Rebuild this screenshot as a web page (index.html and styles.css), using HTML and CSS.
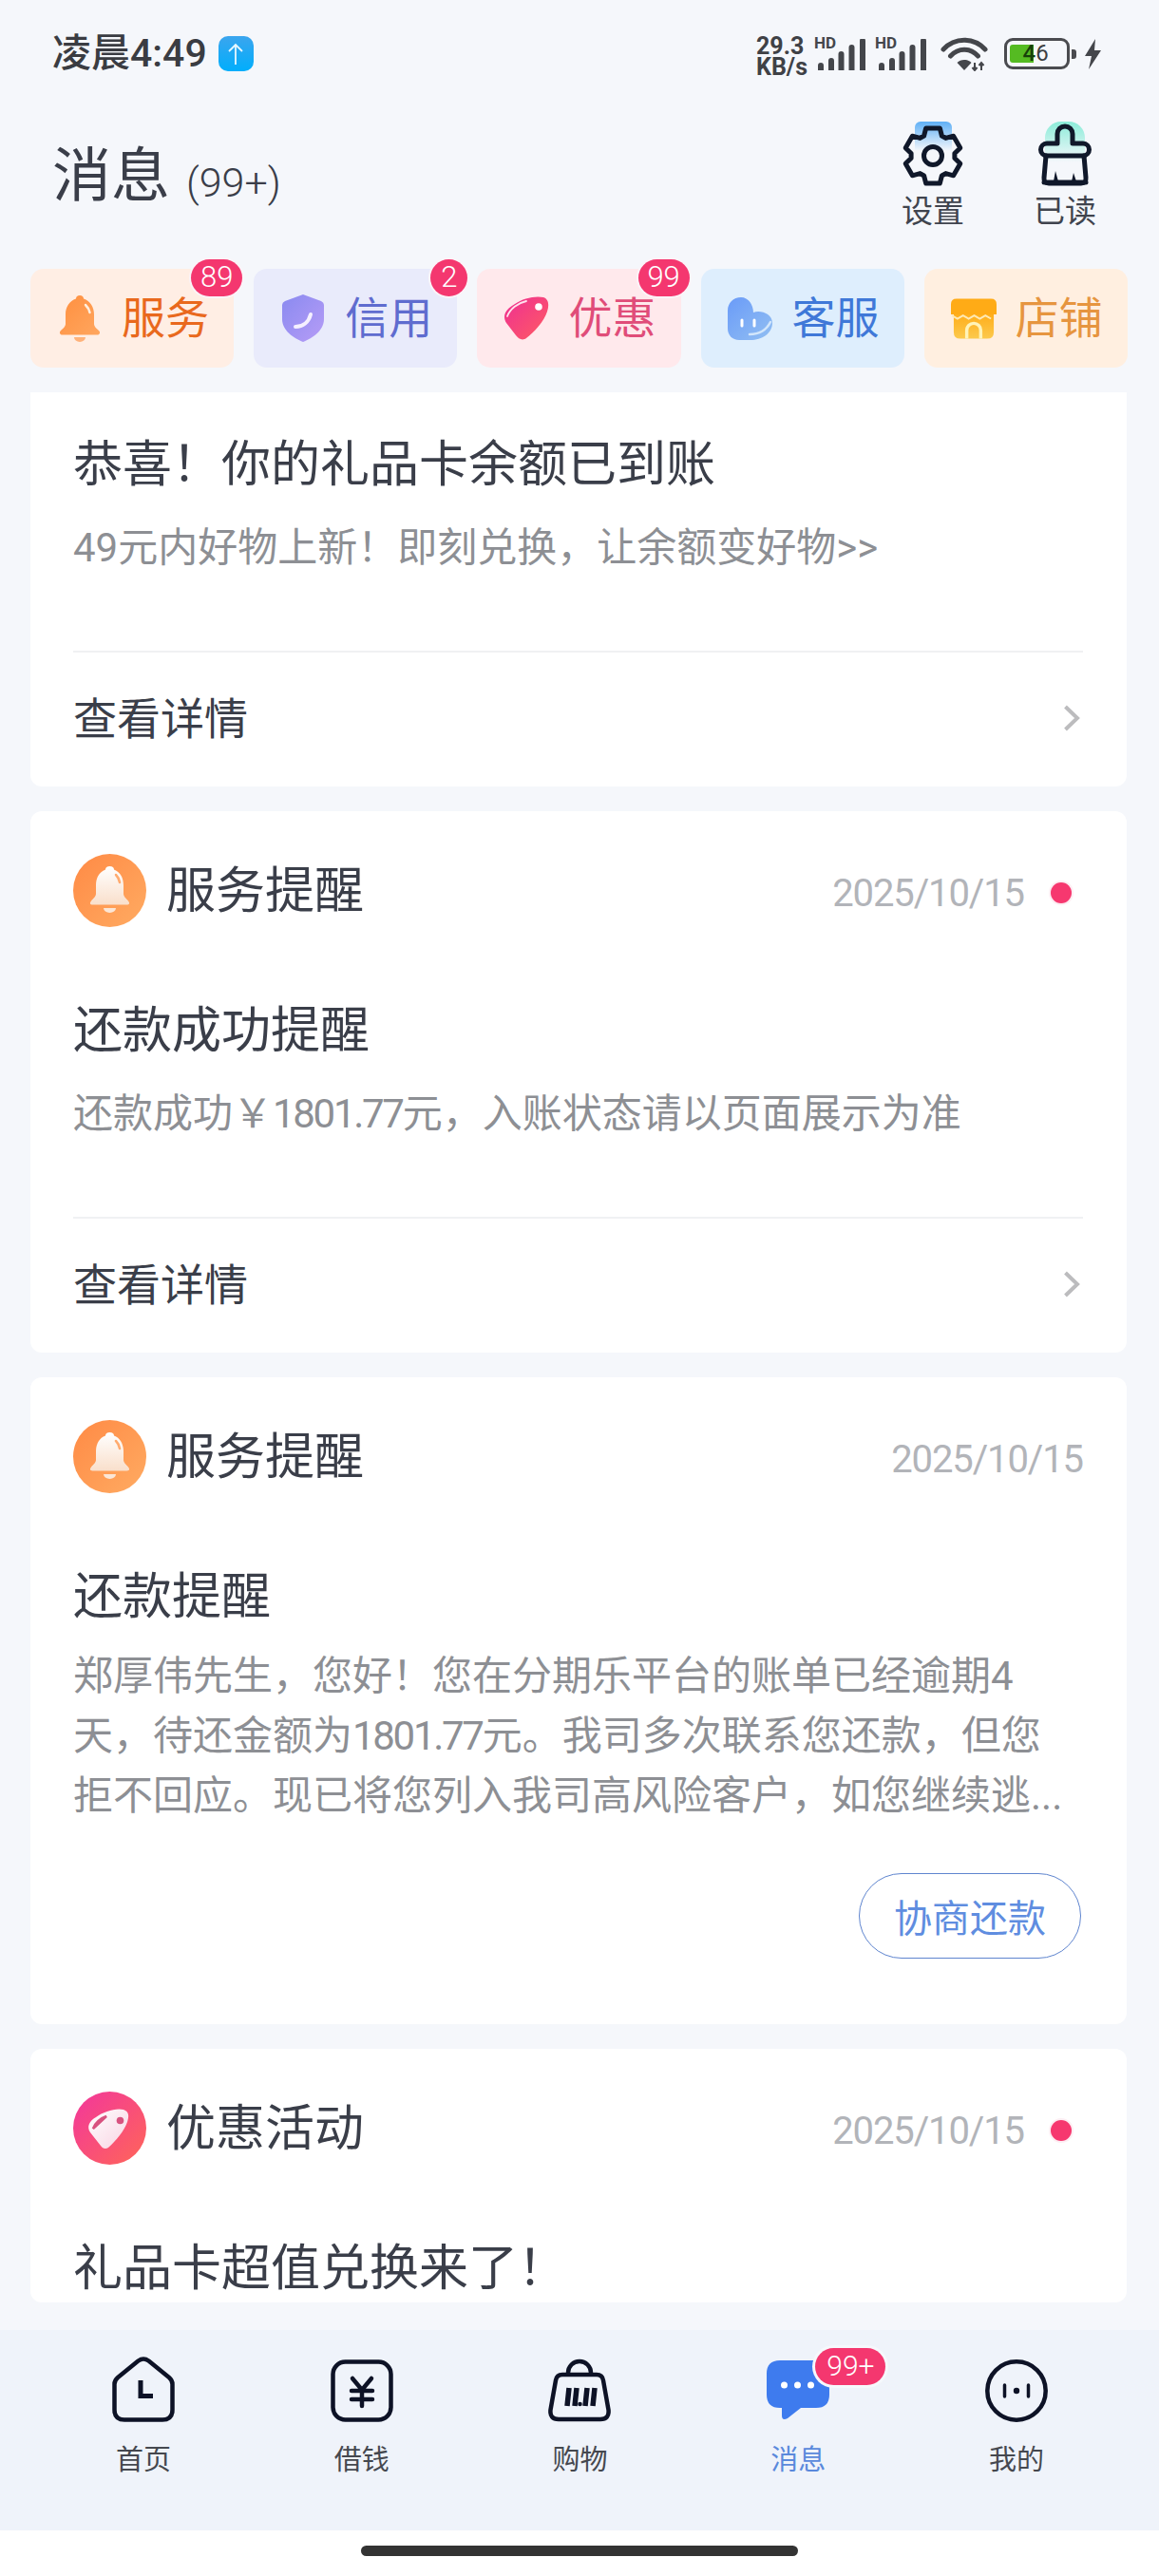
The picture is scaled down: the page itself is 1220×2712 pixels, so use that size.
FILE: index.html
```html
<!DOCTYPE html>
<html lang="zh">
<head>
<meta charset="utf-8">
<title>消息</title>
<link rel="stylesheet" href="styles.css">
</head>
<body>
<div class="app">
  <div class="status-bar">
    <div class="status-left">
      <span class="clock">凌晨4:49</span>
      <span class="upload"><svg width="20" height="24" viewBox="0 0 20 24"><path d="M10 23V2M3 9l7-7 7 7" fill="none" stroke="#e8f8ff" stroke-width="1.8"/></svg></span>
    </div>
    <div class="status-right">
      <div class="speed"><span>29.3</span><span>KB/s</span></div>
      <div class="signal"><span class="hd">HD</span>
        <svg width="50" height="33" viewBox="0 0 50 33"><path d="M0 28a3 3 0 0 1 6 0v5H0zM11 23a3 3 0 0 1 6 0v10h-6zM21.500 16a3 3 0 0 1 6 0v17h-6zM32.500 9a3 3 0 0 1 6 0v24h-6zM44 2a3 3 0 0 1 6 0v31h-6z" fill="#44464b"/></svg>
      </div>
      <div class="signal signal-last"><span class="hd">HD</span>
        <svg width="50" height="33" viewBox="0 0 50 33"><path d="M0 28a3 3 0 0 1 6 0v5H0zM11 23a3 3 0 0 1 6 0v10h-6zM21.500 16a3 3 0 0 1 6 0v17h-6zM32.500 9a3 3 0 0 1 6 0v24h-6zM44 2a3 3 0 0 1 6 0v31h-6z" fill="#44464b"/></svg>
      </div>
      <svg class="wifi" width="50" height="37" viewBox="0 0 50 37"><g fill="none" stroke="#44464b" stroke-width="5" stroke-linecap="round"><path d="M3 14C15 1 35 1 47 14"/><path d="M10.500 21C19 12 31 12 39.500 21"/></g><path d="M17.500 28C21 24 29 24 32.500 28L25 36Z" fill="#44464b"/><path d="M36 28v8M33.500 33l2.500 3 2.500-3M43 36v-8M40.500 31l2.500-3 2.500 3" fill="none" stroke="#44464b" stroke-width="2"/></svg>
      <div class="battery"><span class="battery-fill"></span><span class="battery-num"><b>4</b>6</span></div>
      <span class="battery-nub"></span>
      <svg class="bolt" width="19" height="32" viewBox="0 0 19 32"><path d="M12 0L1 18h7L5 32 18 12h-7z" fill="#44464b"/></svg>
    </div>
  </div>

  <header class="page-header">
    <h1 class="page-title">消息<span class="page-count">(99+)</span></h1>
    <div class="header-actions">
      <div class="action">
        <svg width="64" height="69" viewBox="0 -3 64 69">
          <defs><linearGradient id="gearGlow" x1="0" y1="0" x2="0" y2="1"><stop offset="0" stop-color="#5fb0f6"/><stop offset="1" stop-color="#5fb0f6" stop-opacity="0"/></linearGradient></defs>
          <path d="M13 28V3a6 6 0 0 1 6-6h27a6 6 0 0 1 6 6v25z" fill="url(#gearGlow)"/>
          <polygon points="24.700,3.900 39.300,3.900 41.400,12 45.500,14.400 53.600,12.200 60.800,24.700 54.900,30.600 54.900,35.400 60.800,41.300 53.600,53.800 45.500,51.600 41.400,54 39.300,62.100 24.700,62.100 22.600,54 18.500,51.600 10.400,53.800 3.200,41.300 9.100,35.400 9.100,30.600 3.200,24.700 10.400,12.200 18.500,14.400 22.600,12" fill="none" stroke="#10182a" stroke-width="5" stroke-linejoin="round"/>
          <circle cx="32" cy="33" r="9.500" fill="none" stroke="#10182a" stroke-width="5"/>
        </svg>
        <span class="action-label">设置</span>
      </div>
      <div class="action">
        <svg width="56" height="69" viewBox="0 -3 56 69">
          <defs><linearGradient id="broomGlow" x1="0" y1="0" x2="0" y2="1"><stop offset="0" stop-color="#8cecd9"/><stop offset="1" stop-color="#8cecd9" stop-opacity="0"/></linearGradient></defs>
          <path d="M7 40V14A17 17 0 0 1 24-3h8a17 17 0 0 1 17 17v26z" fill="url(#broomGlow)"/>
          <g fill="none" stroke="#10182a" stroke-width="5" stroke-linejoin="round" stroke-linecap="round">
            <path d="M20 20V10a8 8 0 0 1 16 0V20H47a6.500 6.500 0 0 1 0 13H9a6.500 6.500 0 0 1 0-13Z"/>
            <path d="M8 33L6 56Q5.500 62 11 62H45Q50.500 62 50 56L48 33"/>
            <path d="M6 61H50" stroke-width="5"/>
          </g>
          <path d="M16 60l2-11 3 11zM35 60l2-9 3 9z" fill="#10182a"/>
        </svg>
        <span class="action-label">已读</span>
      </div>
    </div>
  </header>

  <nav class="tabs">
    <div class="tab tab-service">
      <span class="tab-icon"><svg width="44" height="50" viewBox="0 0 44 50">
        <defs><linearGradient id="bellO" x1="0" y1="0" x2="1" y2="1"><stop offset="0" stop-color="#ff8f3f"/><stop offset="1" stop-color="#ffa65e"/></linearGradient></defs>
        <path d="M22 1c2.500 0 4 1.500 4 3.500C33 7 37 13 37 21V31c0 3 3 5 5 7s1 4.500-1.500 4.500H3.500C1 42.500 0 40 2 38s5-4 5-7V21C7 13 11 7 18 4.500 18 2.500 19.500 1 22 1Z" fill="url(#bellO)"/>
        <path d="M16 45h12a6 5 0 0 1-12 0Z" fill="#ffb27a"/>
        <path d="M28 11c2 2 4 5 4.500 8" fill="none" stroke="#ffeedd" stroke-width="2.500" stroke-linecap="round"/>
      </svg></span>
      <span class="tab-text">服务</span>
      <span class="badge badge-wide">89</span>
    </div>
    <div class="tab tab-credit">
      <span class="tab-icon"><svg width="44" height="50" viewBox="0 0 44 50">
        <defs><linearGradient id="shieldP" x1="0" y1="0" x2="1" y2="1"><stop offset="0" stop-color="#8a8af0"/><stop offset="1" stop-color="#b69cf6"/></linearGradient></defs>
        <path d="M22 0L41 7Q44 8.500 44 11V26C44 38 32 46 22 50 12 46 0 38 0 26V11Q0 8.500 3 7Z" fill="url(#shieldP)"/>
        <path d="M14 34C22 34 28 29 30 21" fill="none" stroke="#f5f0ff" stroke-width="4" stroke-linecap="round"/>
      </svg></span>
      <span class="tab-text">信用</span>
      <span class="badge badge-round">2</span>
    </div>
    <div class="tab tab-offer">
      <span class="tab-icon"><svg width="48" height="46" viewBox="0 0 48 46">
        <defs><linearGradient id="tagP" x1="0" y1="0" x2="1" y2="1"><stop offset="0" stop-color="#ee2f93"/><stop offset="1" stop-color="#ff5c62"/></linearGradient></defs>
        <path d="M12 8C20 2 34-1 42 1c6 2 6 9 4 15C43 26 32 38 24 44c-4 3-8 1-11-3L3 28C-2 20 3 13 12 8Z" fill="url(#tagP)"/>
        <circle cx="37" cy="11" r="3.800" fill="#fff"/>
        <path d="M4 21C7 13 15 7 24 5" fill="none" stroke="#ffe3ee" stroke-width="1.800" stroke-linecap="round"/>
      </svg></span>
      <span class="tab-text">优惠</span>
      <span class="badge badge-wide">99</span>
    </div>
    <div class="tab tab-support">
      <span class="tab-icon"><svg width="47" height="45" viewBox="0 0 47 45">
        <defs><linearGradient id="headB" x1="0" y1="0" x2="1" y2="1"><stop offset="0" stop-color="#6a9bf8"/><stop offset="1" stop-color="#92bff2"/></linearGradient></defs>
        <path d="M14 0C22 0 27 8 27 16 34 13 47 17 47 27 47 38 36 45 24 45H12C5 45 0 40 0 33V14C0 6 6 0 14 0Z" fill="url(#headB)"/>
        <path d="M15 24v6M28 24v6" stroke="#fff" stroke-width="3" stroke-linecap="round"/>
        <path d="M23 39C33 39 41 34 45 26" fill="none" stroke="#d2e6fb" stroke-width="2.500" stroke-linecap="round"/>
      </svg></span>
      <span class="tab-text">客服</span>
    </div>
    <div class="tab tab-shop">
      <span class="tab-icon"><svg width="49" height="43" viewBox="0 0 49 43">
        <defs><linearGradient id="shopB" x1="0" y1="0" x2="0" y2="1"><stop offset="0" stop-color="#ffab16"/><stop offset="1" stop-color="#fcc94c"/></linearGradient></defs>
        <path d="M3 14H46V36Q46 43 39 43H10Q3 43 3 36Z" fill="url(#shopB)"/>
        <path d="M6 0H43Q49 0 49 6V17H0V6Q0 0 6 0Z" fill="#ffab16"/>
        <path d="M1 18l6 3.500 6-3.500 6 3.500 6-3.500 6 3.500 6-3.500 6 3.500" fill="none" stroke="#ffe9b4" stroke-width="2"/>
        <path d="M17 43V34a7.500 7.500 0 0 1 15 0V43" fill="none" stroke="#fff3b8" stroke-width="3.500"/>
      </svg></span>
      <span class="tab-text">店铺</span>
    </div>
  </nav>

  <main class="feed">
    <article class="card card-clipped">
      <h2 class="card-title">恭喜！你的礼品卡余额已到账</h2>
      <p class="card-body">49元内好物上新！即刻兑换，让余额变好物&gt;&gt;</p>
      <div class="card-link"><span class="link-text">查看详情</span>
        <svg width="18" height="28" viewBox="0 0 18 28"><path d="M2.500 2L15 14 2.500 26" fill="none" stroke="#bcbcbe" stroke-width="4"/></svg>
      </div>
    </article>

    <article class="card">
      <div class="card-head">
        <div class="card-source">
          <svg class="avatar" width="77" height="77" viewBox="0 0 77 77">
            <defs>
              <linearGradient id="avO" x1="0" y1="0" x2="1" y2="1"><stop offset="0" stop-color="#ff8a45"/><stop offset="1" stop-color="#ffab62"/></linearGradient>
              <linearGradient id="avW" x1="0" y1="0" x2="0" y2="1"><stop offset="0" stop-color="#fff"/><stop offset="1" stop-color="#f9dfcb"/></linearGradient>
            </defs>
            <circle cx="38.500" cy="38.500" r="38.500" fill="url(#avO)"/>
            <path d="M38.500 13c3 0 4.500 1.500 4.500 3.500C50 19 53 26 53 33V42c0 3 3 5 5 7.500s1 4-1.500 4H20.500C18 53.500 17 52 19 49.500s5-4.500 5-7.500V33C24 26 27 19 34 16.500 34 14.500 35.500 13 38.500 13Z" fill="url(#avW)"/>
            <path d="M32 57h13a6.500 5 0 0 1-13 0Z" fill="#fbe6d6"/>
            <path d="M45 22c2 2 3.500 5 4 8" fill="none" stroke="#ffab70" stroke-width="2.500" stroke-linecap="round"/>
          </svg>
          <span class="source-name">服务提醒</span>
        </div>
        <div class="card-meta"><span class="card-date">2025/10/15</span><span class="dot"></span></div>
      </div>
      <h2 class="card-title card-title-gap">还款成功提醒</h2>
      <p class="card-body">还款成功￥<span class="num">1801.77</span>元，入账状态请以页面展示为准</p>
      <div class="card-link"><span class="link-text">查看详情</span>
        <svg width="18" height="28" viewBox="0 0 18 28"><path d="M2.500 2L15 14 2.500 26" fill="none" stroke="#bcbcbe" stroke-width="4"/></svg>
      </div>
    </article>

    <article class="card card-action">
      <div class="card-head">
        <div class="card-source">
          <svg class="avatar" width="77" height="77" viewBox="0 0 77 77">
            <circle cx="38.500" cy="38.500" r="38.500" fill="url(#avO)"/>
            <path d="M38.500 13c3 0 4.500 1.500 4.500 3.500C50 19 53 26 53 33V42c0 3 3 5 5 7.500s1 4-1.500 4H20.500C18 53.500 17 52 19 49.500s5-4.500 5-7.500V33C24 26 27 19 34 16.500 34 14.500 35.500 13 38.500 13Z" fill="url(#avW)"/>
            <path d="M32 57h13a6.500 5 0 0 1-13 0Z" fill="#fbe6d6"/>
            <path d="M45 22c2 2 3.500 5 4 8" fill="none" stroke="#ffab70" stroke-width="2.500" stroke-linecap="round"/>
          </svg>
          <span class="source-name">服务提醒</span>
        </div>
        <div class="card-meta"><span class="card-date">2025/10/15</span></div>
      </div>
      <h2 class="card-title card-title-gap">还款提醒</h2>
      <p class="card-body card-body-long">郑厚伟先生，您好！您在分期乐平台的账单已经逾期4<br>天，待还金额为<span class="num">1801.77</span>元。我司多次联系您还款，但您<br>拒不回应。现已将您列入我司高风险客户，如您继续逃...</p>
      <div class="card-actions"><button class="pill" type="button">协商还款</button></div>
    </article>

    <article class="card">
      <div class="card-head">
        <div class="card-source">
          <svg class="avatar" width="77" height="77" viewBox="0 0 77 77">
            <defs>
              <linearGradient id="avP" x1="0" y1="0" x2="1" y2="1"><stop offset="0" stop-color="#f2369c"/><stop offset="1" stop-color="#ff6658"/></linearGradient>
              <linearGradient id="avT" x1="0" y1="0" x2="1" y2="1"><stop offset="0" stop-color="#ffffff"/><stop offset="1" stop-color="#f8d3e2"/></linearGradient>
            </defs>
            <circle cx="38.500" cy="38.500" r="38.500" fill="url(#avP)"/>
            <path d="M24 27C32 21 45 17 53 19c6 2 6 7 4 13-3 9-12 20-20 27-3 2-6 1-8-2L18 43c-4-6-1-12 6-16Z" fill="url(#avT)"/>
            <circle cx="49.500" cy="30.500" r="3.800" fill="#d8527f"/>
            <path d="M21 39C23 33 29 28 35 26L21 39Z" fill="none" stroke="#d8527f" stroke-width="2.500" stroke-linecap="round"/>
          </svg>
          <span class="source-name">优惠活动</span>
        </div>
        <div class="card-meta"><span class="card-date">2025/10/15</span><span class="dot"></span></div>
      </div>
      <h2 class="card-title card-title-gap">礼品卡超值兑换来了！</h2>
    </article>
  </main>

  <nav class="bottom-nav">
    <div class="nav-item">
      <svg width="66" height="69" viewBox="0 0 66 69"><g fill="none" stroke="#0d1226" stroke-width="4.500"><path d="M27.500 4.500Q33 .5 38.500 4.500L60 22Q63.500 25 63.500 29V56Q63.500 66.500 53 66.500H13Q2.500 66.500 2.500 56V29Q2.500 25 6 22Z" stroke-linejoin="round"/><path d="M30 25V41.500H43" stroke-width="5"/></g></svg>
      <span class="nav-label">首页</span>
    </div>
    <div class="nav-item">
      <svg width="66" height="69" viewBox="0 -3 66 69"><rect x="2.500" y="2.500" width="61" height="61" rx="13" fill="none" stroke="#0d1226" stroke-width="4.500"/><path d="M23 20L33 32 43 20M33 32V49M22 33H44M22 42H44" fill="none" stroke="#0d1226" stroke-width="4.500" stroke-linecap="round" stroke-linejoin="round"/></svg>
      <span class="nav-label">借钱</span>
    </div>
    <div class="nav-item">
      <svg width="66" height="69" viewBox="0 -3 66 69"><g fill="none" stroke="#0d1226" stroke-width="4.500"><path d="M15 16H51Q57 16 58 22L63.500 53Q64.500 63 55 63H11Q1.500 63 2.500 53L8 22Q9 16 15 16Z"/><path d="M21 16V14a12 12 0 0 1 24 0V16"/></g><path d="M20 49l2-19M28 49l2-19M39 49l2-19M47 49l2-19" stroke="#0d1226" stroke-width="5.500" fill="none"/><circle cx="33.500" cy="47" r="2.300" fill="#0d1226"/></svg>
      <span class="nav-label">购物</span>
    </div>
    <div class="nav-item nav-active">
      <svg width="66" height="69" viewBox="0 -4 66 69"><path d="M14 0H52Q66 0 66 14V36Q66 50 52 50H36L22 61Q16 64 16 58V50H14Q0 50 0 36V14Q0 0 14 0Z" fill="#3e7bee"/><circle cx="18.500" cy="26" r="3.500" fill="#fff"/><circle cx="32.500" cy="26" r="3.500" fill="#fff"/><circle cx="46.500" cy="26" r="3.500" fill="#fff"/></svg>
      <span class="nav-label">消息</span>
      <span class="badge nav-badge">99+</span>
    </div>
    <div class="nav-item">
      <svg width="66" height="69" viewBox="0 -3 66 69"><circle cx="33" cy="33" r="30.700" fill="none" stroke="#0d1226" stroke-width="4.500"/><path d="M20.500 27V39M45.500 27V39" stroke="#0d1226" stroke-width="3.500" stroke-linecap="round"/><circle cx="33" cy="33" r="3.200" fill="#0d1226"/></svg>
      <span class="nav-label">我的</span>
    </div>
  </nav>

  <div class="home-area"><span class="home-bar"></span></div>
</div>
</body>
</html>
```

FILE: styles.css
```css
* { box-sizing: border-box; }
html, body { margin: 0; padding: 0; }
body {
  width: 1220px;
  height: 2712px;
  overflow: hidden;
  background: #f5f7fb;
  font-family: Roboto, "Noto Sans CJK SC", sans-serif;
  color: #3a3e49;
}
.app {
  width: 1220px;
  height: 2712px;
  display: flex;
  flex-direction: column;
}

/* status bar */
.status-bar {
  height: 120px;
  flex: none;
  padding: 38px 0 0 55px;
  display: flex;
  justify-content: space-between;
  align-items: flex-start;
}
.status-left { display: flex; align-items: center; gap: 12px; height: 37px; }
.clock { font-size: 41px; line-height: 37px; font-weight: 500; color: #3a3c42; white-space: nowrap; }
.upload {
  width: 37px;
  height: 37px;
  border-radius: 10px;
  background: linear-gradient(180deg, #3ba5ee, #00aefc);
  display: flex;
  align-items: center;
  justify-content: center;
}
.status-right { display: flex; align-items: flex-start; width: 424px; height: 40px; }
.speed {
  width: 65px;
  flex: none;
  display: flex;
  flex-direction: column;
  font-size: 25px;
  line-height: 22px;
  font-weight: 700;
  color: #3f4146;
}
.signal { position: relative; flex: none; width: 50px; height: 33px; margin: 3px 14px 0 0; }
.signal-last { margin-right: 15px; }
.signal svg { display: block; }
.hd {
  position: absolute;
  left: -4px;
  top: -3px;
  font-size: 17px;
  line-height: 15px;
  font-weight: 700;
  color: #44464b;
}
.wifi { margin-right: 17px; flex: none; }
.battery {
  position: relative;
  width: 69px;
  height: 33px;
  margin-top: 2px;
  border: 3.500px solid #4a4b4f;
  border-radius: 9px;
  flex: none;
}
.battery-fill {
  position: absolute;
  left: 3px;
  top: 3.500px;
  width: 25px;
  height: 19px;
  border-radius: 3px 0 0 3px;
  background: #55bb22;
}
.battery-num {
  position: absolute;
  left: 16.500px;
  top: 3px;
  font-size: 24px;
  line-height: 21px;
  color: #3c3f42;
  font-weight: 400;
}
.battery-num b { font-weight: 500; color: #17400a; }
.battery-nub { width: 5px; height: 10px; margin: 14px 8px 0 2px; background: #4a4b4f; border-radius: 0 3px 3px 0; flex: none; }
.bolt { flex: none; margin-top: 3px; }

/* header */
.page-header {
  height: 153px;
  flex: none;
  display: flex;
  justify-content: space-between;
  padding: 0 49px 0 55px;
}
.page-title {
  margin: 29px 0 0;
  font-size: 62px;
  line-height: 74px;
  font-weight: 400;
  color: #3a3e49;
  display: flex;
  align-items: baseline;
  height: 74px;
}
.page-count { font-size: 43px; font-weight: 300; margin-left: 17px; color: #3a3e49; }
.header-actions { display: flex; gap: 39px; margin-top: 8px; }
.action { width: 100px; display: flex; flex-direction: column; align-items: center; }
.action svg { display: block; height: 69px; }
.action-label { margin-top: 6px; font-size: 33px; line-height: 40px; color: #40444e; white-space: nowrap; }

/* tabs */
.tabs {
  flex: none;
  margin: 10px 33px 26px 32px;
  display: grid;
  grid-template-columns: repeat(5, 1fr);
  gap: 21px;
}
.tab {
  position: relative;
  height: 104px;
  border-radius: 14px;
  display: flex;
  align-items: center;
  gap: 20px;
  padding-left: 28px;
}
.tab-icon { width: 48px; height: 52px; display: flex; align-items: center; justify-content: center; flex: none; }
.tab-icon svg { display: block; }
.tab-text { font-size: 46px; line-height: 56px; white-space: nowrap; }
.tab-service { background: #ffeee4; color: #e9691d; }
.tab-credit { background: #e9ebfb; color: #5f6ccf; }
.tab-offer { background: #ffe9ec; color: #e04d79; }
.tab-support { background: #deeefd; color: #3f78d8; }
.tab-shop { background: #ffefe0; color: #e6953f; }
.badge {
  position: absolute;
  top: -10px;
  height: 39px;
  border-radius: 20px;
  background: #f4376f;
  color: #fff;
  font-size: 31px;
  line-height: 38px;
  font-weight: 300;
  text-align: center;
  box-shadow: 0 0 0 2px #fbf4f8;
}
.badge-wide { width: 54px; right: -9px; }
.badge-round { width: 39px; right: -11px; }

/* feed */
.feed {
  flex: 1;
  min-height: 0;
  overflow: hidden;
  padding: 0 34px 0 32px;
  display: flex;
  flex-direction: column;
  gap: 26px;
}
.card {
  flex: none;
  background: #fff;
  border-radius: 12px;
  padding: 45px 46px 0 45px;
}
.card-clipped { border-radius: 0 0 12px 12px; padding-top: 42px; }
.card-action { padding-bottom: 69px; }
.card-head { display: flex; justify-content: space-between; align-items: center; height: 77px; }
.card-source { display: flex; align-items: center; gap: 21px; }
.avatar { display: block; flex: none; }
.source-name { font-size: 52px; line-height: 70px; margin-top: 3px; color: #3a3e49; }
.card-meta { display: flex; align-items: center; padding-top: 4px; }
.card-date { font-size: 40px; line-height: 50px; margin-top: 2px; color: #b2b4b9; letter-spacing: -1.100px; }
.dot {
  width: 22px;
  height: 22px;
  margin: 0 12px 0 28px;
  border-radius: 50%;
  background: #f6386f;
  box-shadow: 0 0 0 2px #fdeef3;
}
.card-title { margin: 0; font-size: 52px; line-height: 70px; font-weight: 400; color: #3a3e49; }
.card-title-gap { margin-top: 75px; }
.card-body {
  margin: 20px 0 0;
  font-size: 42px;
  line-height: 63px;
  color: #8d8f94;
  white-space: nowrap;
}
.card-body-long { margin-top: 16px; }
.num { letter-spacing: -2.300px; }
.card-link {
  margin-top: 77px;
  height: 143px;
  border-top: 2px solid #f0f1f3;
  display: flex;
  justify-content: space-between;
  align-items: center;
  padding: 0 3px 3px 0;
  font-size: 46px;
  color: #3a3e49;
}
.link-text { margin-bottom: 6px; }
.card-link svg { display: block; flex: none; }
.card-actions { display: flex; justify-content: flex-end; margin-top: 50px; }
.pill {
  width: 234px;
  height: 90px;
  margin-right: 2px;
  border: 1.500px solid #5f85cf;
  border-radius: 45px;
  background: #fff;
  color: #5f8de0;
  font: inherit;
  font-size: 40px;
  padding: 0;
}

/* bottom nav */
.bottom-nav {
  flex: none;
  height: 211px;
  padding: 28px 35px 0 36px;
  background: #eff3fa;
  display: grid;
  grid-template-columns: repeat(5, 1fr);
}
.nav-item { position: relative; display: flex; flex-direction: column; align-items: center; justify-content: flex-start; }
.nav-item svg { display: block; height: 69px; }
.nav-label { margin-top: 20px; font-size: 29px; line-height: 40px; color: #45484f; }
.nav-active .nav-label { color: #5a89dc; }
.nav-badge {
  top: -9px;
  left: 133px;
  width: 74px;
  height: 39px;
  font-size: 30px;
  line-height: 38px;
  box-shadow: 0 0 0 3px #f6f8fc;
}
.home-area { flex: none; height: 48px; background: #fff; display: flex; justify-content: center; padding-top: 16px; }
.home-bar { width: 460px; height: 11px; border-radius: 6px; background: #333; }
```
